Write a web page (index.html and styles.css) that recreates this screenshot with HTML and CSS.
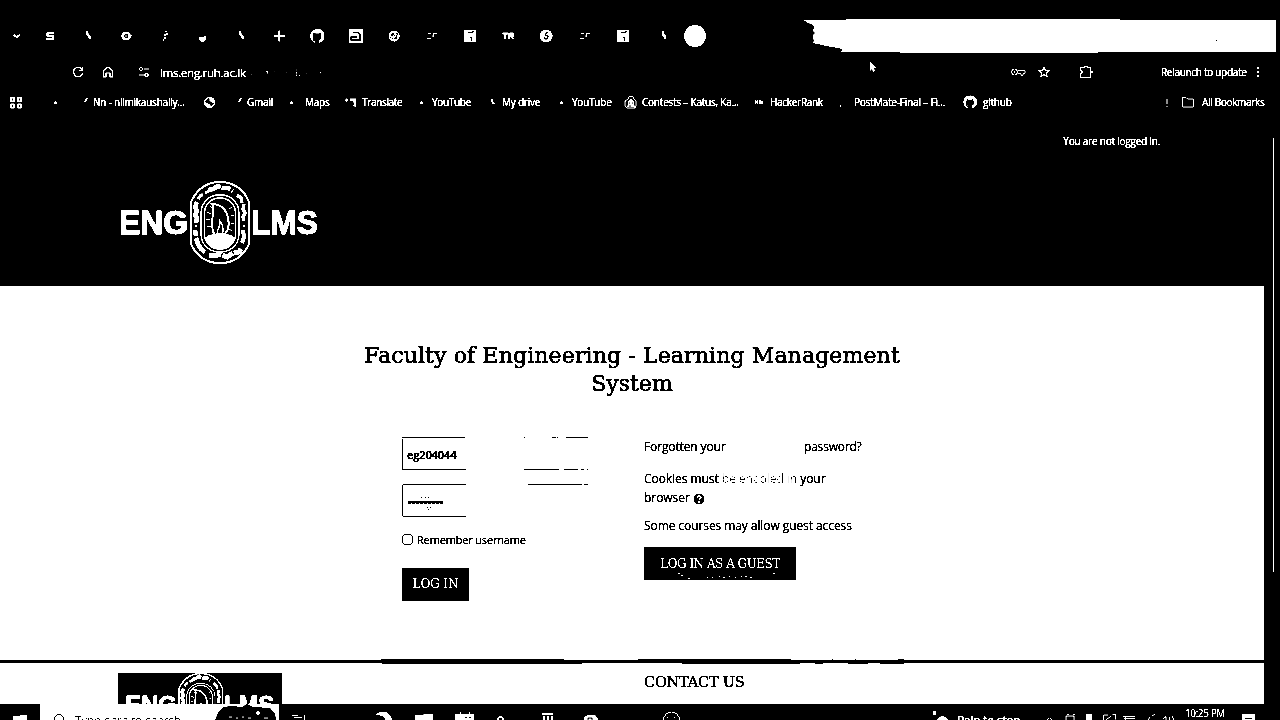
FILE: index.html
```html
<!DOCTYPE html>
<html lang="en">
<head>
<meta charset="utf-8">
<title>Faculty of Engineering - Learning Management System</title>
<link rel="stylesheet" href="styles.css">
</head>
<body>
<svg class="defs" width="0" height="0">
  <symbol id="logo" viewBox="0 0 200 86">
    <text x="0" y="54" class="word" textLength="69" lengthAdjust="spacingAndGlyphs">ENG</text>
    <text x="132" y="54" class="word" textLength="67" lengthAdjust="spacingAndGlyphs">LMS</text>
    <g fill="none" stroke="#fff">
      <path d="M72 64V22C78 9 88 2 101 2s24 7 29 20v42c-6 13-16 19-29 19S78 77 72 64z" stroke-width="2"/>
      <rect x="82" y="15" width="38" height="57" rx="18" stroke-width="1.300"/>
      <rect x="85.500" y="18" width="31" height="51" rx="15" stroke-width="1.500"/>
      <path d="M78 22l-2 5 2 4-2 4 2 3-1 5" stroke-width="4.500"/>
      <path d="M77 45v2M125 45v2" stroke-width="2"/>
      <path d="M125 24l-1 5 2 4-2 4 1 4" stroke-width="3.500"/>
      <path d="M79 19l3-4 2 0M86 13l4-2" stroke-width="3"/>
      <path d="M89 10l5-1 5-3 5 2 5 0 5 3" stroke-width="4.500" stroke-dasharray="14 1 9 2"/>
      <path d="M118 15l4 3 1 5" stroke-width="3.500"/>
      <path d="M76 50l1 6M77 58l2 6 3 5 4 3" stroke-width="4.500"/>
      <path d="M90 75l6 1 5-2 7 3 6-4 6-1 3-4" stroke-width="5" stroke-dasharray="13 1 12 1 9 1"/>
      <path d="M124 50l1 7-2 6" stroke-width="4"/>
      <path d="M95 54c-4-9-1-15-1-22 0-4 2-6-1-8 10 0 15 7 16 14 2 9-1 15-6 18" stroke-width="1.900"/>
      <path d="M99 56c-3-6 3-8 2-15 4 5 4 12 1 15" stroke-width="1.300"/>
      <path d="M88 32l4 2M87 39l4 1M88 47l4-1M91 26l2 2M110 29l3-2M112 36l3-1M112 43l3 1M110 49l3 2" stroke-width="1"/>
    </g>
    <path d="M87 57c7-5 21-5 28 0-1 7-7 12-14 12s-13-5-14-12z" fill="#fff"/>
  </symbol>
  <symbol id="github" viewBox="0 0 16 16">
    <path fill="#fff" d="M8 .5a7.500 7.500 0 0 0-2.400 14.600c.4.1.5-.2.5-.4v-1.400c-2 .4-2.500-.9-2.500-.9-.4-.9-.9-1.100-.9-1.100 1.200-.2 1.700.7 1.700.7.600 1.100 1.800.8 2 .6-1.700-.8-3.100-1.500-3.100-4 0-.8.3-1.500.8-2-.1-.5-.2-1.200.1-2 1 0 2 .8 2 .8h3.600s1-.8 2-.8c.3.8.2 1.500.1 2 .5.5.8 1.200.8 2 0 2.500-1.400 3.300-3 3.700.3.300.5.800.5 1.500v1c0 .2.1.5.5.4A7.500 7.500 0 0 0 8 .5z"/>
  </symbol>
  <symbol id="leaf" viewBox="0 0 24 24"><path fill="#fff" d="M8.500 7h2l.5 3 2 2v3h-1.500l-1-2-2-2z"/></symbol>
  <symbol id="page" viewBox="0 0 24 24"><path fill="#fff" d="M6 6h12v12H6z"/><path d="M10 8.500h3l3-1M12 13.500h1.500V17" stroke="#000" stroke-width="1.200" fill="none"/></symbol>
  <symbol id="strokes" viewBox="0 0 24 24"><path d="M8 9.500h3M13.500 13V9.500H17M7 14.500h4M11 12h2" stroke="#fff" stroke-width="1" fill="none"/></symbol>
</svg>

<div class="browser">
  <div class="tabs">
    <svg class="chev" viewBox="0 0 34 24"><path d="M15 10.500l3.300 3 3.300-3" fill="none" stroke="#fff" stroke-width="1.800"/></svg>
    <svg class="tab" viewBox="0 0 24 24"><path d="M15.500 9H9.500v3h5v3H8" fill="none" stroke="#fff" stroke-width="2"/><path d="M8.500 9v3M15 12v3" stroke="#fff"/></svg>
    <svg class="tab" viewBox="0 0 24 24"><use href="#leaf" x="1.500"/></svg>
    <svg class="tab" viewBox="0 0 24 24"><ellipse cx="12" cy="12" rx="3.500" ry="3.200" fill="none" stroke="#fff" stroke-width="2.500"/><path d="M6.500 11.500h3m5 0h3M10.500 12h3" stroke="#fff"/></svg>
    <svg class="tab" viewBox="0 0 24 24"><path d="M13 7.500h2M15 9v2M12 11h2M13 13v2M11 16h1" fill="none" stroke="#fff" stroke-width="1.500"/></svg>
    <svg class="tab" viewBox="0 0 24 24"><path d="M8 13h3l1 1 1-2h2v3l-2 3h-3l-2-2z" fill="#fff"/></svg>
    <svg class="tab" viewBox="0 0 24 24"><use href="#leaf" x="1.500"/></svg>
    <svg class="tab" viewBox="0 0 24 24"><path d="M6.500 12h11M12 6.500v11" stroke="#fff" stroke-width="2"/></svg>
    <svg class="tab" viewBox="0 0 24 24"><use href="#github" x="4.500" y="4.500" width="15" height="15"/></svg>
    <svg class="tab" viewBox="0 0 24 24"><path d="M5.500 5h14v14h-14z" fill="#fff"/><path d="M9.500 8.500h5l2.500 2v5.500H8v-3h6.500" fill="none" stroke="#000" stroke-width="1.500"/></svg>
    <svg class="tab" viewBox="0 0 24 24"><g fill="none" stroke="#fff" stroke-width="1.100"><circle cx="12" cy="12" r="5"/><circle cx="11" cy="11" r="2.500"/><circle cx="13.500" cy="13" r="2.500"/><path d="M10 8l5 1M8 14l5 3"/></g></svg>
    <svg class="tab" viewBox="0 0 24 24"><use href="#strokes"/></svg>
    <svg class="tab" viewBox="0 0 24 24"><use href="#page"/></svg>
    <svg class="tab" viewBox="0 0 24 24"><path d="M6 9.500h6M9 9v6M13 9v6m0-5.500h3.500v2.500h-3m2 0l1.500 3" fill="none" stroke="#fff" stroke-width="2"/></svg>
    <svg class="tab" viewBox="0 0 24 24"><circle cx="12" cy="12" r="6.500" fill="#fff"/><path d="M13.500 8l-2.500 3 3 1-1 3h-2l-1-2" fill="none" stroke="#000" stroke-width="1.200"/></svg>
    <svg class="tab" viewBox="0 0 24 24"><use href="#strokes"/></svg>
    <svg class="tab" viewBox="0 0 24 24"><use href="#page"/></svg>
    <svg class="tab" viewBox="0 0 24 24"><use href="#leaf" x="4"/></svg>
    <span class="active-dot"></span>
    <svg class="strip" viewBox="0 0 480 40"><path fill="#fff" d="M4 6h42V5h274v1h156v32H298v1H100v-1H41v-1l2-1-4-2-8-1-9-2-9-2 1-3-1-1v-4l2-2-2-2 1-4-2-3-5-1-1-2H4z"/><path d="M416 26h1v1h-1z"/></svg>
  </div>

  <div class="toolbar">
    <svg class="reload" viewBox="0 0 14 14"><path d="M11 4.500A4.600 4.600 0 1 0 11.600 8M11.500 2v3.500H8" fill="none" stroke="#fff" stroke-width="1.400"/></svg>
    <svg class="home" viewBox="0 0 14 14"><path d="M2.500 12V5.500L7 2l4.500 3.500V12H9V8H5v4z" fill="none" stroke="#fff" stroke-width="1.200"/></svg>
    <svg class="tune" viewBox="0 0 14 14"><g fill="none" stroke="#fff" stroke-width="1.200"><circle cx="4" cy="4" r="1.500"/><path d="M7 4h5M2 10h5"/><circle cx="9.500" cy="10" r="1.600"/></g></svg>
    <span class="url">lms.eng.ruh.ac.lk</span><span class="path">/login/index.php</span>
    <svg class="key" viewBox="0 0 16 14"><g fill="none" stroke="#fff"><circle cx="4.500" cy="7" r="3"/><path d="M8 5.500h7v3h-2v2h-2v-2H8"/></g><circle cx="4.500" cy="7" r="1" fill="#fff"/></svg>
    <svg class="star" viewBox="0 0 14 14"><path d="M7 2l1.400 3.300 3.600.3-2.700 2.300.8 3.600L7 9.600l-3.100 1.900.8-3.600L2 5.600l3.600-.3z" fill="none" stroke="#fff" stroke-width="1.200"/></svg>
    <svg class="ext" viewBox="0 0 14 14"><path d="M1.500 2.500H5l1-1h2l1 1h2.500V6l1.500 1-1.500 1v4.500h-10V9L3 8V6L1.500 5.500z" fill="none" stroke="#fff" stroke-width="1.400"/></svg>
    <span class="relaunch">Relaunch to update</span>
    <svg class="kebab" viewBox="0 0 4 14"><path d="M1 2h2v2H1zM1 6h2v2H1zM1 10h2v2H1z" fill="#fff"/></svg>
  </div>

  <div class="bookmarks">
    <svg class="apps" viewBox="0 0 14 14"><g fill="none" stroke="#fff" stroke-width="1.500"><path d="M1.800 2.800h3.400v3.400H1.800zM8.800 2.800h3.400v3.400H8.800zM1.800 9.300h3.400v3.400H1.800zM8.800 9.300h3.400v3.400H8.800z"/></g></svg>
    <i class="dot"></i>
    <i class="tick"></i>
    <span class="b1">Nn - nilmikaushally...</span>
    <svg class="globe" viewBox="0 0 14 14"><circle cx="7.500" cy="7.500" r="4.900" fill="none" stroke="#fff" stroke-width="1.300"/><path d="M2.500 6.500l3 2 3 1v2l-1 1-3-1-2-3zM7.500 2.500l4 1 1 4-2 1-1-2h-2z" fill="#fff"/></svg>
    <i class="tick"></i>
    <span class="b2">Gmail</span>
    <i class="dot"></i>
    <span class="b3">Maps</span>
    <svg class="trans" viewBox="0 0 14 14"><path d="M1 5l2-2 1 2-1 2-2-1zM6 3.500h6V12l-3-1 1-2-1-3H6z" fill="#fff"/></svg>
    <span class="b4">Translate</span>
    <i class="dot"></i>
    <span class="b5">YouTube</span>
    <svg class="drive" viewBox="0 0 14 14"><path d="M4.500 4h2l.5 2 2 3H6z" fill="#fff"/></svg>
    <span class="b6">My drive</span>
    <i class="dot"></i>
    <span class="b7">YouTube</span>
    <svg class="contest" viewBox="0 0 14 14"><path d="M5 2l2-1 2 1 1 2 2 2v5l-1 2H3l-2-2V6l3-2z" fill="none" stroke="#fff"/><path d="M4 6l3-2 3 2v3l1 3H3l1-3z" fill="#fff"/><path d="M5 8h1m2 0h1M5 11h2" stroke="#000"/></svg>
    <span class="b8">Contests – Katus, Ka...</span>
    <svg class="hr" viewBox="0 0 14 14"><path d="M4.500 5v4m2-4v4M4 7h3M9 5v4m2-3v3" fill="none" stroke="#fff" stroke-width="1.100"/></svg>
    <span class="b9">HackerRank</span>
    <i class="dot low"></i>
    <span class="b10">PostMate-Final – Fi...</span>
    <svg class="gh" viewBox="0 0 16 16"><use href="#github"/></svg>
    <span class="b11">github</span>
    <svg class="sep" viewBox="0 0 2 14"><path d="M.5 4h1v5h-1zM.5 11h1v1h-1z" fill="#fff"/></svg>
    <svg class="folder" viewBox="0 0 14 14"><path d="M1.500 2.500H5L6.500 4h6v8h-11z" fill="none" stroke="#fff"/></svg>
    <span class="b12">All Bookmarks</span>
  </div>

  <div class="viewport">
    <div class="page">
      <header class="site-header">
        <div class="login-state">You are not logged in.</div>
        <svg class="logo"><use href="#logo"/></svg>
      </header>
      <main class="main">
        <h1 class="title"><span class="t1">Faculty of Engineering - Learning Management</span><br><span class="t2">System</span></h1>
        <div class="columns">
          <form class="form">
            <div class="field"><svg class="edge" viewBox="0 0 186 33"><path d="M0 .5h63M122 .5h1M150 .5h4M155 .5h1M164 .5h22M.5 2v31M0 32.500h64M122 32.500h35M162 32.500h14M179 32.500h3M185 32.500h1" fill="none" stroke="#000"/></svg><span class="user">eg204044</span></div>
            <div class="field second"><svg class="edge" viewBox="0 0 186 33"><path d="M1 .5h63M126 .5h54M182 .5h4M.5 1v31M1 32.500h63" fill="none" stroke="#000"/><path d="M6 18h35" stroke="#000" stroke-width="2"/><path d="M6 18.500h35" stroke="#000" stroke-width="3" stroke-dasharray="3 1"/><path d="M19 13.500h1M23 13.500h1M26 13.500h1M25 23.500h1M28 23.500h1M26 25.500h1" stroke="#000"/></svg></div>
            <label class="remember"><i class="box"></i><span class="rem">Remember username</span></label>
            <div class="btn login"><span>LOG IN</span></div>
          </form>
          <section class="help">
            <p class="forgot"><span class="f1">Forgotten your</span><span class="f2">password?</span></p>
            <p class="cookies"><span class="c1">Cookies must <span class="thin">be enabled in</span> your</span><br><span class="c2">browser</span> <svg class="q" viewBox="0 0 12 12"><circle cx="6" cy="6" r="5.500"/><path d="M4 4.800c0-2.600 4-2.300 4-.2C8 6 6 5.800 6 7.200M6 8.200v1.500" fill="none" stroke="#fff" stroke-width="1.400"/></svg></p>
            <p class="some">Some courses may allow guest access</p>
            <div class="btn guest"><span>LOG IN AS A GUEST</span><svg class="specks" viewBox="0 0 152 8"><path d="M34 1.500h2M37 3.500h2M44 6.500h2M63 5.500h1M68 5.500h1M75 4.500h1M79 5.500h2M85 4.500h1M91 5.500h1M97 4.500h1M101 4.500h2M106 5.500h2M129 1.500h2" stroke="#fff"/></svg></div>
          </section>
        </div>
      </main>
      <svg class="rule" viewBox="0 0 1264 6"><path d="M0 2h381V1h183v1h74v-1h153v1h41v-1h1v1h22v-1h1v1h42v-1h6v1h360v3H904v1H880v-1H868v1H848v-1H823v1H815v-1H800v1H683l-2-1H582v1H382V5H0z"/></svg>
      <footer class="footer">
        <div class="foot-logo"><svg class="small-logo"><use href="#logo"/></svg></div>
        <h2 class="contact">CONTACT US</h2>
      </footer>
    </div>
    <div class="scroll"><i></i></div>
  </div>

  <div class="taskbar">
    <svg class="start" viewBox="0 0 40 16"><path d="M13 12l14-1v5H13z" fill="#fff"/></svg>
    <div class="search">
      <svg class="lens" viewBox="0 0 20 16"><circle cx="10" cy="15" r="4.500" fill="none" stroke="#000"/></svg>
      <span class="stext">Type here to search</span>
      <svg class="art" viewBox="0 0 66 16"><path d="M2 16l3-7 5-6 9-1 10 1 5-3 6 3 17 1 5 5 1 7z"/><circle cx="45" cy="9" r="2" fill="#fff"/><path d="M16 13h3M23 14h2M29 13h2M35 14h3M51 14h4" stroke="#fff" fill="none"/></svg>
    </div>
    <svg class="apps-bar" viewBox="0 0 640 16"><g fill="#fff"><path d="M96 11c7-6 15-4 17 5h-7c0-4-5-5-10-5zM136 11h8l1-1h9v6h-18zM176 10h5V8h1v2h8V8h1v2h4v6h-19zM263 9h11v2h-11zM264 12h2v4h-2zM268 12h2v4h-2zM272 12h2v4h-2zM305 13l4-2h7l3 3v2h-14z"/><path d="M13 11h6v1h-6zM15 13h8v1h-8zM25 11h1v5h-1z"/></g><path d="M186 13.500h2m2 0h2M309 16v-2h4v2" stroke="#000" fill="none"/><g fill="none" stroke="#fff"><path d="M219 16c0-4 5-4 5 0" stroke-width="1.500"/><circle cx="392.500" cy="16" r="8"/><path d="M388 13.500h2m5 0h2" stroke-dasharray="1 1"/></g></svg>
    <svg class="cloud" viewBox="0 0 24 16"><path d="M1 7h3v4H1zM5 16c1-5 9-5 11 0z" fill="#fff"/></svg>
    <span class="weather">Rain to stop</span>
    <svg class="tray" viewBox="0 0 140 16"><g fill="none" stroke="#fff"><path d="M4 16l2.500-2 2.500 2M23 16v-4h8v4M24 10.500h2m4 0h2M60.500 16v-5h5m4-.5h3v5M63 16l5-4M80 12.500h12M82.500 13v3M81 14.500h11M105 16l2-3M109 12l3-2M120 14.500l3-2v4M126.500 13v3M129 12l2 4"/></g><path d="M43 10h6v6h-6z" fill="#fff"/></svg>
    <span class="clock">10:25 PM</span>
    <svg class="notif" viewBox="0 0 14 16"><path d="M0 10h13v6H0z" fill="#fff"/><path d="M3 14.500h7" stroke="#000"/></svg>
  </div>
  <svg class="cursor" viewBox="0 0 8 12"><path d="M1 0l6 7H5l1 3-2 1-1-3-2 2z" fill="#fff"/></svg>
</div>
</body>
</html>
```
FILE: styles.css
```css
* { box-sizing: border-box; }
body { margin: 0; background: #000; }
.defs { display: block; height: 0; }
.browser {
  position: relative;
  width: 1280px; height: 720px;
  display: flex; flex-direction: column;
  overflow: hidden;
  background: #000; color: #fff;
  font-family: "Open Sans", "Noto Sans", sans-serif;
  font-size: 10px; white-space: nowrap;
  letter-spacing: -.13px;
  -webkit-text-stroke: .3px currentColor;
  filter: contrast(30);
}
svg { display: block; flex: none; -webkit-text-stroke: 0; letter-spacing: 0; }
p, h1, h2 { margin: 0; font-weight: 400; }
.word { font: bold 32.500px "Liberation Sans", Arial, sans-serif; fill: #fff; stroke: #fff; stroke-width: 1.100px; }

.tabs { height: 54px; display: flex; align-items: center; padding-top: 18px; }
.chev { width: 30.9px; height: 24px; }
.tab { width: 38.2px; height: 24px; }
.active-dot { width: 22px; height: 22px; border-radius: 50%; background: #fff; margin-left: 3.700px; flex: none; }
.strip { width: 480px; height: 40px; margin: -4px 0 0 94px; align-self: flex-start; }

.toolbar { height: 36px; display: flex; align-items: center; padding-left: 71px; }
.toolbar > svg { width: 14px; height: 14px; }
.toolbar > span { flex: none; }
.toolbar .home { margin-left: 16px; }
.toolbar .tune { margin-left: 22px; }
.url { width: 86px; margin-left: 9px; font-size: 11.500px; letter-spacing: -.28px; }
.path { width: 78px; margin-left: 4px; font-size: 11px; color: #8f8f8f; -webkit-text-stroke: 0; }
.toolbar .key { width: 16px; margin-left: 682px; }
.toolbar .star { margin-left: 11px; }
.toolbar .ext { margin-left: 28px; }
.relaunch { width: 87px; margin-left: 68px; letter-spacing: -.3px; }
.toolbar .kebab { width: 4px; margin-left: 8px; }

.bookmarks { height: 24px; margin-bottom: 1px; display: flex; align-items: center; padding-left: 9px; letter-spacing: -.22px; }
.bookmarks span { flex: none; }
.bookmarks svg { width: 14px; height: 14px; }
.dot { width: 3px; height: 3px; background: #fff; border-radius: 1.500px; flex: none; }
.dot.low { width: 1px; height: 2px; margin: 8px 13px 0 17px; }
.tick { width: 2px; height: 4px; background: #fff; transform: skewX(-20deg); margin-bottom: 4px; flex: none; }
.apps + .dot { margin-left: 31px; }
.dot + .tick { margin-left: 28px; }
.b1 { width: 92px; margin-left: 6px; }
.globe { margin-left: 17px; }
.globe + .tick { margin-left: 23px; }
.b2 { width: 26px; margin-left: 6px; }
.b2 + .dot { margin-left: 17px; }
.b3 { width: 24px; margin-left: 12px; }
.trans { margin-left: 15px; }
.b4 { width: 38px; margin-left: 4px; letter-spacing: -.33px; }
.b4 + .dot { margin-left: 20px; }
.b5 { width: 38px; margin-left: 9px; letter-spacing: -.33px; }
.drive { margin-left: 16px; }
.b6 { width: 38px; margin-left: 2px; }
.b6 + .dot { margin-left: 20px; }
.b7 { width: 39px; margin-left: 9px; }
.contest { margin-left: 13px; }
.b8 { width: 96px; margin-left: 4px; }
.hr { margin-left: 13px; }
.b9 { width: 53px; margin-left: 5px; letter-spacing: -.3px; }
.b10 { width: 91px; letter-spacing: -.17px; }
.gh { margin-left: 18px; }
.b11 { width: 28px; margin-left: 6px; }
.bookmarks .sep { width: 2px; margin-left: 155px; }
.folder { margin-left: 13px; }
.b12 { width: 62px; margin-left: 7px; letter-spacing: -.33px; }

.viewport { height: 589px; display: flex; }
.page { width: 1264px; display: flex; flex-direction: column; background: #fff; color: #000; }
.site-header { height: 171px; background: #000; color: #fff; padding: 19px 104px 0 119px; flex: none; }
.login-state { height: 14px; line-height: 14px; text-align: right; letter-spacing: -.22px; }
.logo { width: 200px; height: 86px; margin-top: 32px; }
.scroll { width: 16px; padding: 23px 0 0 9px; }
.scroll i { display: block; width: 1px; height: 434px; background: #fff; }

.main { height: 373px; padding: 56px 0 0; flex: none; }
.title { text-align: center; font: 22px/28px "DejaVu Serif", serif; letter-spacing: .12px; -webkit-text-stroke: .5px #000; }
.t2 { letter-spacing: 0; }
.columns { display: flex; padding: 39px 0 0 402px; }
.form { width: 242px; }
.field { width: 186px; height: 33px; display: grid; align-items: center; }
.field > * { grid-area: 1 / 1; }
.field.second { margin-top: 13px; height: 34px; }
.edge { width: 186px; height: 33px; }
.user { padding: 1px 0 0 5px; font-size: 11px; font-weight: 600; letter-spacing: -.1px; -webkit-text-stroke: .5px #000; }
.remember { height: 14px; margin-top: 15px; display: flex; align-items: center; gap: 4px; font-size: 11px; letter-spacing: -.17px; }
.box { width: 11px; height: 11px; border: 1px solid #000; border-radius: 3px; }
.btn { height: 33px; background: #000; color: #fff; font: 12px/33px "DejaVu Serif", serif; text-align: center; -webkit-text-stroke: 0; }
.login { width: 67px; margin-top: 22px; }
.login span { letter-spacing: -.1px; }
.help { font-size: 12px; line-height: 20px; }
.forgot { display: flex; letter-spacing: -.2px; }
.f1 { width: 82px; letter-spacing: -.13px; }
.f2 { margin-left: 78px; }
.cookies { margin-top: 12px; letter-spacing: -.05px; }
.c2 { position: relative; top: -1px; }
.thin { color: #5c5c5c; -webkit-text-stroke: 0; }
.q { display: inline-block; width: 12px; height: 12px; vertical-align: -2px; }
.some { margin-top: 7px; letter-spacing: -.08px; }
.guest { width: 152px; margin-top: 11px; display: grid; }
.guest span { letter-spacing: -.5px; line-height: 35px; height: 33px; }
.guest > * { grid-area: 1 / 1; }
.specks { width: 152px; height: 8px; align-self: end; }

.rule { width: 1264px; height: 6px; margin-top: -1px; }
.footer { display: flex; height: 46px; padding: 9px 0 0 118px; overflow: hidden; }
.foot-logo { width: 164px; height: 40px; background: #000; padding: 0 0 0 7px; }
.small-logo { width: 150px; height: 64.500px; margin-top: -1px; }
.contact { margin-left: 362px; font: 14.500px/19px "DejaVu Serif", serif; letter-spacing: -.2px; -webkit-text-stroke: .4px #000; }

.taskbar { height: 16px; display: flex; overflow: hidden; background: #000; }
.taskbar svg { height: 16px; }
.start { width: 40px; }
.search { width: 239px; background: #fff; color: #000; display: flex; }
.lens { width: 20px; margin-left: 9px; }
.stext { width: 107px; margin: 7px 0 0 6px; font-size: 11.500px; line-height: 18px; -webkit-text-stroke: 0; letter-spacing: 0; color: #333; }
.search .art { width: 66px; margin-left: 32px; }
.apps-bar { width: 640px; }
.cloud { width: 24px; margin-left: 13px; }
.weather { width: 63px; margin: 8px 0 0 1px; font-size: 12px; line-height: 18px; letter-spacing: -.3px; }
.tray { width: 140px; margin-left: 23px; }
.clock { width: 39px; margin-left: 2px; line-height: 18px; letter-spacing: -.4px; -webkit-text-stroke: .1px #fff; }
.notif { width: 14px; margin-left: 18px; }

.cursor { position: absolute; left: 869px; top: 61px; width: 8px; height: 12px; }
```
